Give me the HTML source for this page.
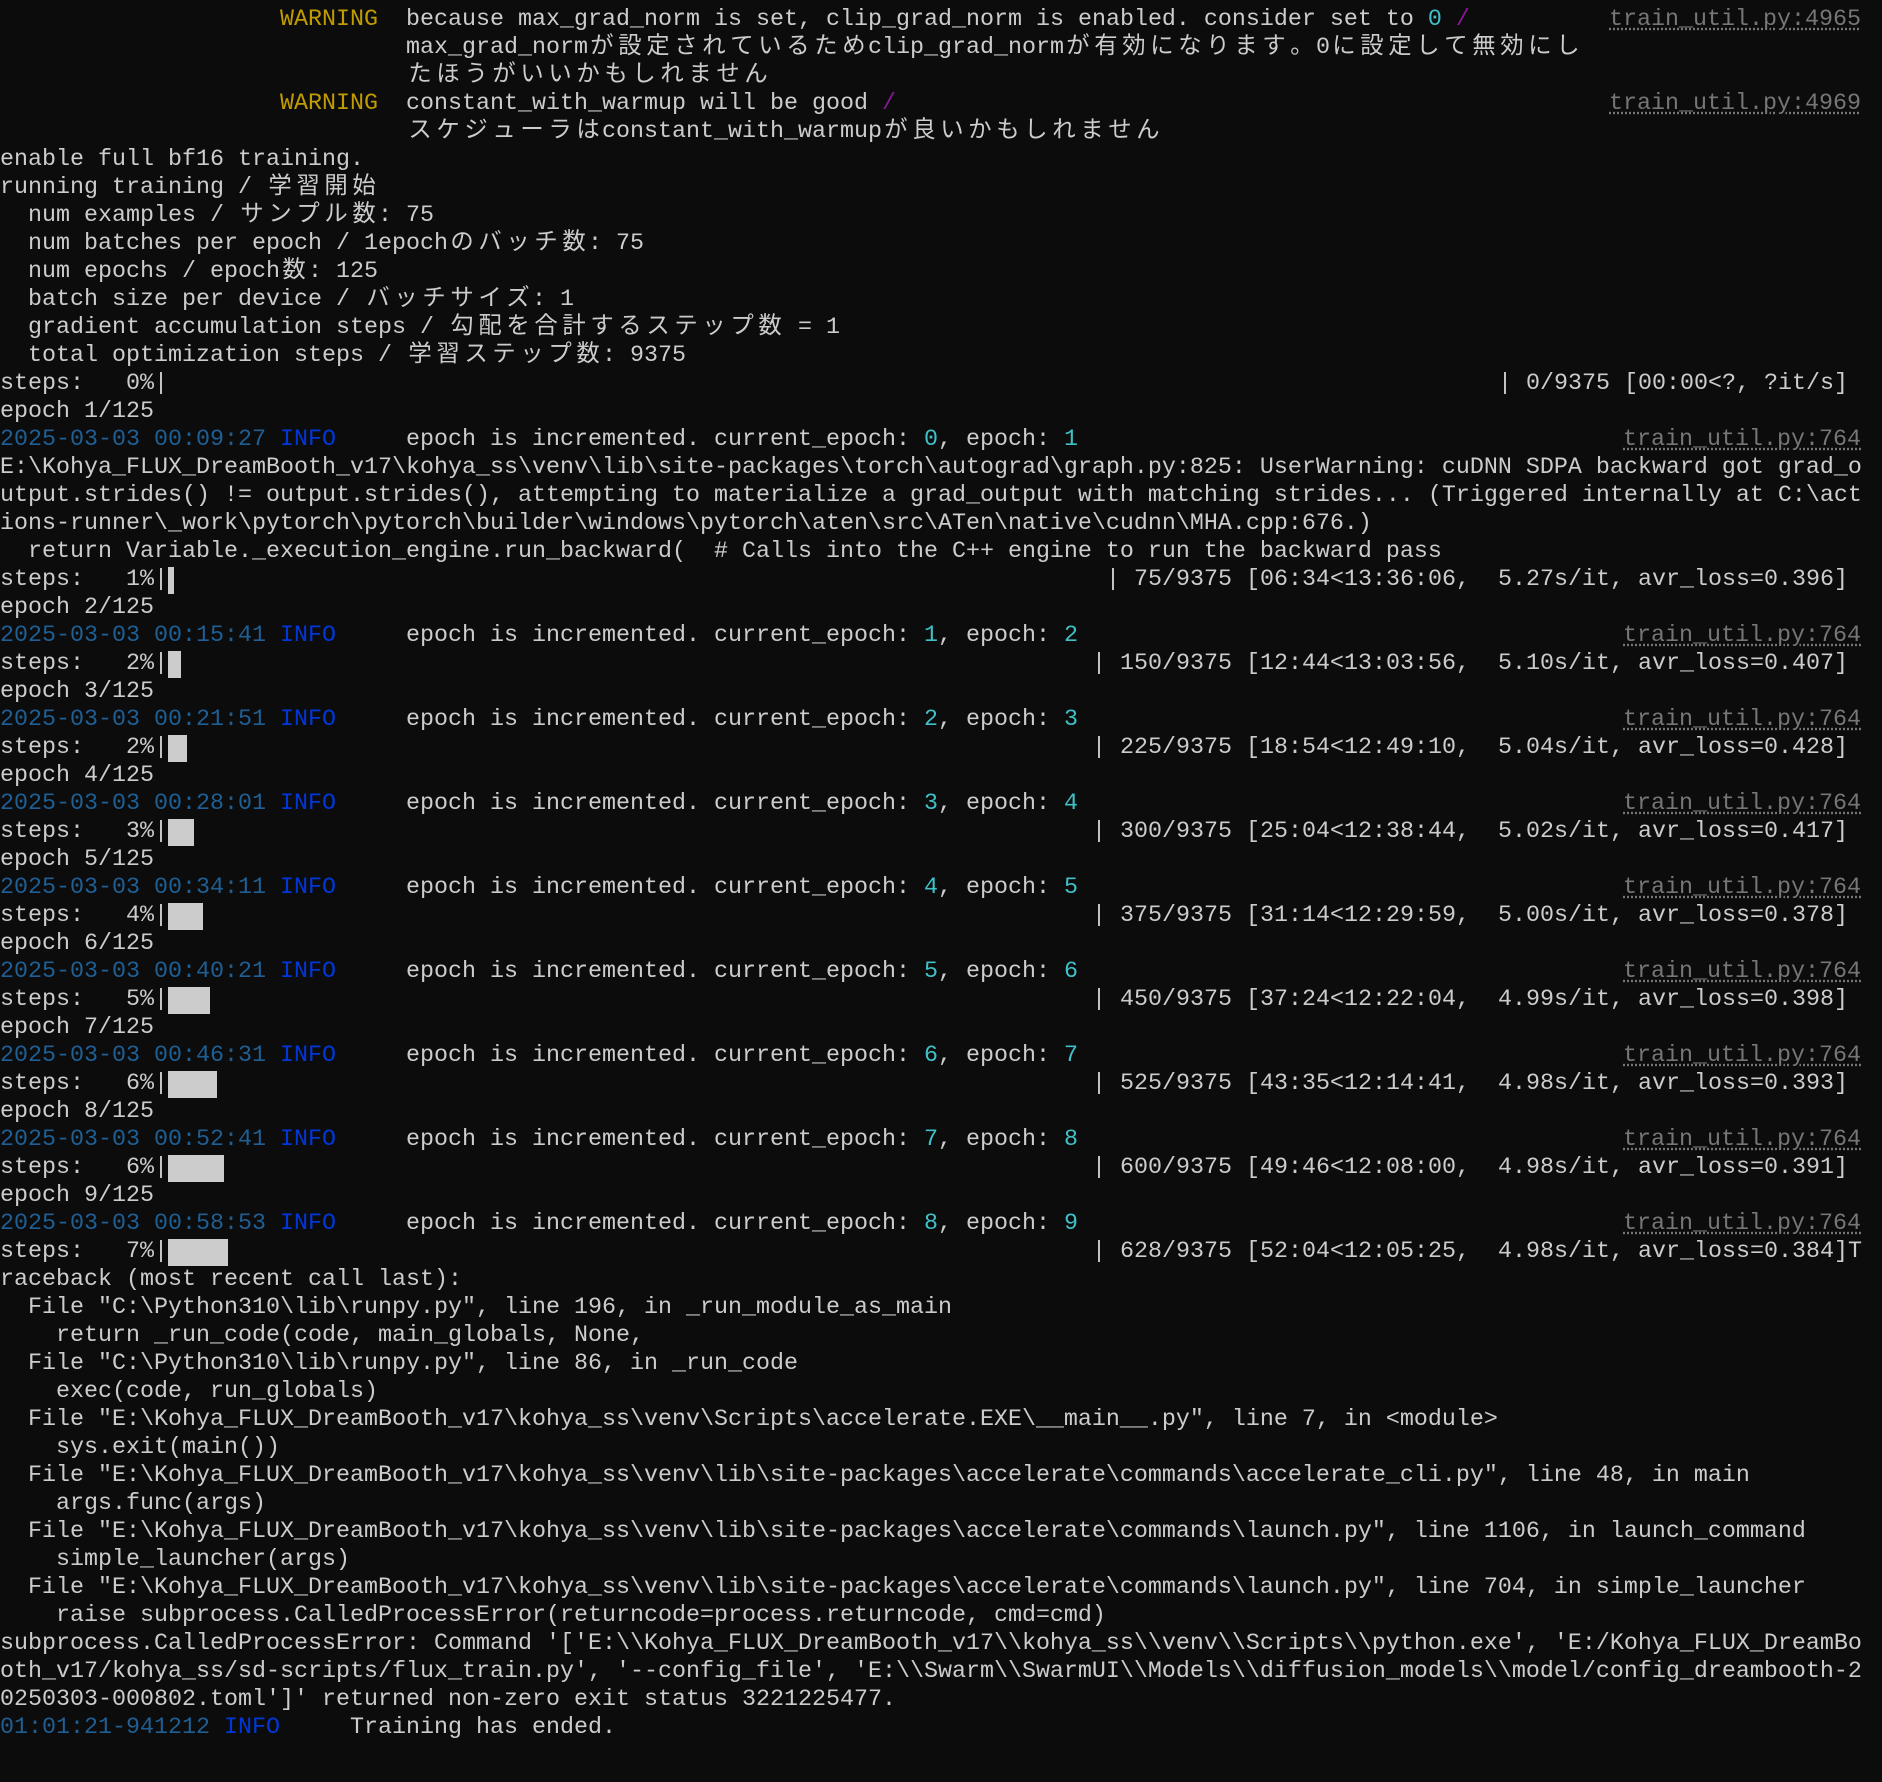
<!DOCTYPE html>
<html><head><meta charset="utf-8"><style>
html,body{margin:0;padding:0;background:#0c0c0c;width:1882px;height:1782px;overflow:hidden}
#t{position:absolute;left:0;top:6px;font-family:"Liberation Mono","Noto Sans CJK JP",monospace;font-size:23.33px;color:#cccccc}
.l{position:relative;height:28px;line-height:28px;white-space:pre;width:1882px}
.y{color:#c19c00}.m{color:#881798}.c{color:#3fc1c9}.d{color:#1f5f94}.i{color:#0037da}
.r{position:absolute;right:21px;top:0;color:#767676;text-decoration:underline dotted #767676;text-underline-offset:3px}
.p{position:absolute;top:0}
.b{display:inline-block;background:#cccccc;height:27px;vertical-align:top;margin-top:1px}
.w{display:inline-block;width:28px;text-align:center}
</style></head><body><div id="t">
<div class="l">                    <span class="y">WARNING</span>  because max_grad_norm is set, clip_grad_norm is enabled. consider set to <span class="c">0</span> <span class="m">/</span><span class="r">train_util.py:4965</span></div>
<div class="l">                             max_grad_normが設定されているためclip_grad_normが有効になります。0に設定して無効にし</div>
<div class="l">                             たほうがいいかもしれません</div>
<div class="l">                    <span class="y">WARNING</span>  constant_with_warmup will be good <span class="m">/</span><span class="r">train_util.py:4969</span></div>
<div class="l">                             スケジューラはconstant_with_warmupが良いかもしれません</div>
<div class="l">enable full bf16 training.</div>
<div class="l">running training / 学習開始</div>
<div class="l">  num examples / サンプル数: 75</div>
<div class="l">  num batches per epoch / 1epochのバッチ数: 75</div>
<div class="l">  num epochs / epoch数: 125</div>
<div class="l">  batch size per device / バッチサイズ: 1</div>
<div class="l">  gradient accumulation steps / 勾配を合計するステップ数 = 1</div>
<div class="l">  total optimization steps / 学習ステップ数: 9375</div>
<div class="l">steps:   0%|<span class="p" style="left:1498px">| 0/9375 [00:00&lt;?, ?it/s]</span></div>
<div class="l">epoch 1/125</div>
<div class="l"><span class="d">2025-03-03 00:09:27</span> <span class="i">INFO</span>     epoch is incremented. current_epoch: <span class="c">0</span>, epoch: <span class="c">1</span><span class="r">train_util.py:764</span></div>
<div class="l">E:\Kohya_FLUX_DreamBooth_v17\kohya_ss\venv\lib\site-packages\torch\autograd\graph.py:825: UserWarning: cuDNN SDPA backward got grad_o</div>
<div class="l">utput.strides() != output.strides(), attempting to materialize a grad_output with matching strides... (Triggered internally at C:\act</div>
<div class="l">ions-runner\_work\pytorch\pytorch\builder\windows\pytorch\aten\src\ATen\native\cudnn\MHA.cpp:676.)</div>
<div class="l">  return Variable._execution_engine.run_backward(  # Calls into the C++ engine to run the backward pass</div>
<div class="l">steps:   1%|<span class="b" style="width:6px"></span><span class="p" style="left:1106px">| 75/9375 [06:34&lt;13:36:06,  5.27s/it, avr_loss=0.396]</span></div>
<div class="l">epoch 2/125</div>
<div class="l"><span class="d">2025-03-03 00:15:41</span> <span class="i">INFO</span>     epoch is incremented. current_epoch: <span class="c">1</span>, epoch: <span class="c">2</span><span class="r">train_util.py:764</span></div>
<div class="l">steps:   2%|<span class="b" style="width:13px"></span><span class="p" style="left:1092px">| 150/9375 [12:44&lt;13:03:56,  5.10s/it, avr_loss=0.407]</span></div>
<div class="l">epoch 3/125</div>
<div class="l"><span class="d">2025-03-03 00:21:51</span> <span class="i">INFO</span>     epoch is incremented. current_epoch: <span class="c">2</span>, epoch: <span class="c">3</span><span class="r">train_util.py:764</span></div>
<div class="l">steps:   2%|<span class="b" style="width:19px"></span><span class="p" style="left:1092px">| 225/9375 [18:54&lt;12:49:10,  5.04s/it, avr_loss=0.428]</span></div>
<div class="l">epoch 4/125</div>
<div class="l"><span class="d">2025-03-03 00:28:01</span> <span class="i">INFO</span>     epoch is incremented. current_epoch: <span class="c">3</span>, epoch: <span class="c">4</span><span class="r">train_util.py:764</span></div>
<div class="l">steps:   3%|<span class="b" style="width:26px"></span><span class="p" style="left:1092px">| 300/9375 [25:04&lt;12:38:44,  5.02s/it, avr_loss=0.417]</span></div>
<div class="l">epoch 5/125</div>
<div class="l"><span class="d">2025-03-03 00:34:11</span> <span class="i">INFO</span>     epoch is incremented. current_epoch: <span class="c">4</span>, epoch: <span class="c">5</span><span class="r">train_util.py:764</span></div>
<div class="l">steps:   4%|<span class="b" style="width:35px"></span><span class="p" style="left:1092px">| 375/9375 [31:14&lt;12:29:59,  5.00s/it, avr_loss=0.378]</span></div>
<div class="l">epoch 6/125</div>
<div class="l"><span class="d">2025-03-03 00:40:21</span> <span class="i">INFO</span>     epoch is incremented. current_epoch: <span class="c">5</span>, epoch: <span class="c">6</span><span class="r">train_util.py:764</span></div>
<div class="l">steps:   5%|<span class="b" style="width:42px"></span><span class="p" style="left:1092px">| 450/9375 [37:24&lt;12:22:04,  4.99s/it, avr_loss=0.398]</span></div>
<div class="l">epoch 7/125</div>
<div class="l"><span class="d">2025-03-03 00:46:31</span> <span class="i">INFO</span>     epoch is incremented. current_epoch: <span class="c">6</span>, epoch: <span class="c">7</span><span class="r">train_util.py:764</span></div>
<div class="l">steps:   6%|<span class="b" style="width:49px"></span><span class="p" style="left:1092px">| 525/9375 [43:35&lt;12:14:41,  4.98s/it, avr_loss=0.393]</span></div>
<div class="l">epoch 8/125</div>
<div class="l"><span class="d">2025-03-03 00:52:41</span> <span class="i">INFO</span>     epoch is incremented. current_epoch: <span class="c">7</span>, epoch: <span class="c">8</span><span class="r">train_util.py:764</span></div>
<div class="l">steps:   6%|<span class="b" style="width:56px"></span><span class="p" style="left:1092px">| 600/9375 [49:46&lt;12:08:00,  4.98s/it, avr_loss=0.391]</span></div>
<div class="l">epoch 9/125</div>
<div class="l"><span class="d">2025-03-03 00:58:53</span> <span class="i">INFO</span>     epoch is incremented. current_epoch: <span class="c">8</span>, epoch: <span class="c">9</span><span class="r">train_util.py:764</span></div>
<div class="l">steps:   7%|<span class="b" style="width:60px"></span><span class="p" style="left:1092px">| 628/9375 [52:04&lt;12:05:25,  4.98s/it, avr_loss=0.384]T</span></div>
<div class="l">raceback (most recent call last):</div>
<div class="l">  File "C:\Python310\lib\runpy.py", line 196, in _run_module_as_main</div>
<div class="l">    return _run_code(code, main_globals, None,</div>
<div class="l">  File "C:\Python310\lib\runpy.py", line 86, in _run_code</div>
<div class="l">    exec(code, run_globals)</div>
<div class="l">  File "E:\Kohya_FLUX_DreamBooth_v17\kohya_ss\venv\Scripts\accelerate.EXE\__main__.py", line 7, in &lt;module&gt;</div>
<div class="l">    sys.exit(main())</div>
<div class="l">  File "E:\Kohya_FLUX_DreamBooth_v17\kohya_ss\venv\lib\site-packages\accelerate\commands\accelerate_cli.py", line 48, in main</div>
<div class="l">    args.func(args)</div>
<div class="l">  File "E:\Kohya_FLUX_DreamBooth_v17\kohya_ss\venv\lib\site-packages\accelerate\commands\launch.py", line 1106, in launch_command</div>
<div class="l">    simple_launcher(args)</div>
<div class="l">  File "E:\Kohya_FLUX_DreamBooth_v17\kohya_ss\venv\lib\site-packages\accelerate\commands\launch.py", line 704, in simple_launcher</div>
<div class="l">    raise subprocess.CalledProcessError(returncode=process.returncode, cmd=cmd)</div>
<div class="l">subprocess.CalledProcessError: Command '['E:\\Kohya_FLUX_DreamBooth_v17\\kohya_ss\\venv\\Scripts\\python.exe', 'E:/Kohya_FLUX_DreamBo</div>
<div class="l">oth_v17/kohya_ss/sd-scripts/flux_train.py', '--config_file', 'E:\\Swarm\\SwarmUI\\Models\\diffusion_models\\model/config_dreambooth-2</div>
<div class="l">0250303-000802.toml']' returned non-zero exit status 3221225477.</div>
<div class="l"><span class="d">01:01:21-941212</span> <span class="i">INFO</span>     Training has ended.</div>
</div>
<script>
(function(){
var re=/[\u3000-\u9fff\uff00-\uffef]/;
var walker=document.createTreeWalker(document.getElementById('t'),NodeFilter.SHOW_TEXT,null);
var nodes=[];while(walker.nextNode())nodes.push(walker.currentNode);
nodes.forEach(function(n){
 if(!re.test(n.nodeValue))return;
 var f=document.createDocumentFragment();
 var s=n.nodeValue,buf='';
 for(var k=0;k<s.length;k++){var ch=s[k];
  if(re.test(ch)){if(buf){f.appendChild(document.createTextNode(buf));buf='';}
   var sp=document.createElement('span');sp.className='w';sp.textContent=ch;f.appendChild(sp);}
  else buf+=ch;}
 if(buf)f.appendChild(document.createTextNode(buf));
 n.parentNode.replaceChild(f,n);
});
})();
</script>
</body></html>
